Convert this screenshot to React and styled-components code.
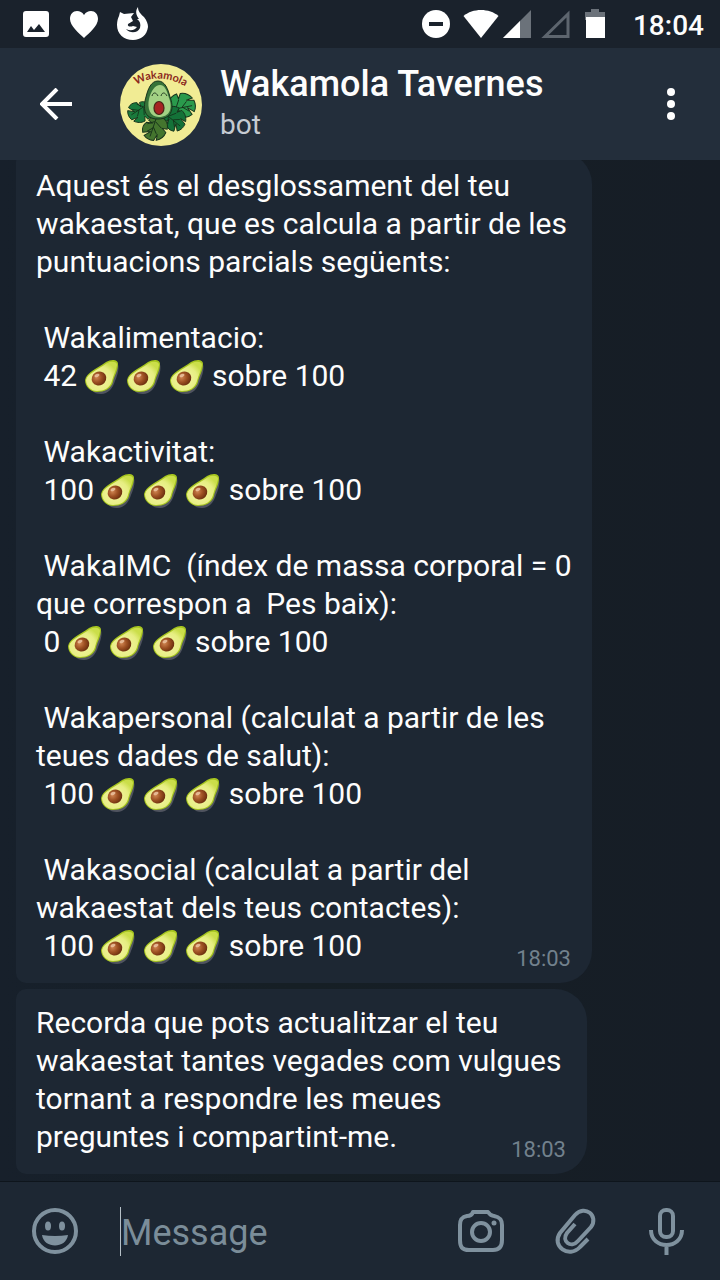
import React from "react";
import styled, { createGlobalStyle } from "styled-components";

const GlobalStyle = createGlobalStyle`
  * { box-sizing: border-box; }
  body { margin: 0; background: #161e27; }
`;

const Screen = styled.div`
  display: flex;
  flex-direction: column;
  height: 100vh;
  font-family: Roboto, "Liberation Sans", sans-serif;
  color: #fdfdfd;
  background: #161e27;
`;

const StatusBar = styled.div`
  display: flex;
  flex: none;
  align-items: center;
  justify-content: space-between;
  height: 48px;
  padding: 0 16px 0 20px;
  background: #1a222c;
`;

const StatusGroup = styled.div`
  display: flex;
  align-items: center;
  gap: ${(p) => p.$gap || 0}px;
`;

const Clock = styled.span`
  padding-top: 4px;
  font-size: 28px;
  font-weight: 500;
  line-height: 44px;
`;

const Header = styled.header`
  display: flex;
  flex: none;
  align-items: center;
  height: 112px;
  padding: 0 25px 0 32px;
  background: #232e3b;
  z-index: 1;
`;

const IconButton = styled.button`
  display: flex;
  align-items: center;
  justify-content: center;
  flex: none;
  width: 48px;
  height: 48px;
  padding: 0;
  border: 0;
  background: none;
  color: inherit;
`;

const AvatarWrap = styled.div`
  flex: none;
  width: 82px;
  height: 82px;
  margin: 2px 18px 0 40px;
`;

const Titles = styled.div`
  flex: 1;
  min-width: 0;
`;

const Title = styled.h1`
  margin: 0;
  font-size: 36px;
  font-weight: 500;
  line-height: 42px;
  white-space: nowrap;
`;

const Subtitle = styled.p`
  margin: 0;
  font-size: 28px;
  line-height: 40px;
  color: #c5cbd2;
`;

const Chat = styled.main`
  display: flex;
  flex: 1;
  flex-direction: column;
  justify-content: flex-end;
  align-items: flex-start;
  gap: 6px;
  min-height: 0;
  padding: 0 16px 7px;
  overflow: hidden;
  background: linear-gradient(90deg, #17202b, #161f25 40%, #161d26);
`;

const Bubble = styled.article`
  flex: none;
  max-width: ${(p) => p.$max}px;
  padding: 15px 20px 18px;
  border-radius: 10px 32px 32px 10px;
  background: #1d2733;
`;

const Paragraph = styled.p`
  margin: 0 0 ${(p) => (p.$last ? 0 : 38)}px;
  font-size: 30px;
  line-height: 38px;
  white-space: pre-wrap;
`;

const Time = styled.time`
  float: right;
  height: 24px;
  margin: 20px 1px -6px 0;
  font-size: 22px;
  line-height: 24px;
  color: #72818d;
`;

const EmojiSvg = styled.svg`
  width: 35px;
  height: 35px;
  vertical-align: -8px;
`;

const Composer = styled.form`
  display: flex;
  flex: none;
  align-items: center;
  height: 99px;
  padding: 0 30px;
  border-top: 1px solid #0e151c;
  background: #1d2733;
  color: #7f919e;
`;

const Field = styled.div`
  display: flex;
  flex: 1;
  align-items: center;
  min-width: 0;
  margin-left: 42px;
`;

const Caret = styled.span`
  flex: none;
  width: 1px;
  height: 49px;
  background: #b6c0c7;
`;

const MessageInput = styled.input`
  flex: 1;
  min-width: 0;
  padding: 4px 0 0;
  border: 0;
  outline: 0;
  background: none;
  color: #fdfdfd;
  font-family: inherit;
  font-size: 36px;
  line-height: 48px;
  &::placeholder { color: #7b8d99; opacity: 1; }
`;

const Actions = styled.div`
  display: flex;
  flex: none;
  gap: 45px;
`;

const Avocado = () => (
  <EmojiSvg viewBox="0 0 35 35" role="img" aria-label="🥑">
    <defs>
      <radialGradient id="pit" cx="0.4" cy="0.35" r="0.7">
        <stop offset="0" stopColor="#cf8450" />
        <stop offset="0.5" stopColor="#9c4f22" />
        <stop offset="1" stopColor="#652b0c" />
      </radialGradient>
      <radialGradient id="flesh" cx="0.42" cy="0.6" r="0.62">
        <stop offset="0" stopColor="#f6f4a4" />
        <stop offset="0.7" stopColor="#e6ee82" />
        <stop offset="1" stopColor="#cbde4a" />
      </radialGradient>
    </defs>
    <path d="M32 3c3 5 1 12-2 19-2 7-7 13-14 13-4 0-7-1-9-4l4-5z" fill="#50545f" />
    <path d="M21 3c5-3 12-3 12 2 0 7-4 12-5 18-2 7-9 10-16 10C5 33 0 27 0 21 2 13 10 11 21 3z" fill="#a5c41e" />
    <path d="M22 4c4-2 10-2 10 2-1 6-4 11-5 16-2 7-8 10-15 10C6 32 1 27 1 21c2-7 10-9 21-17z" fill="url(#flesh)" />
    <ellipse cx="14" cy="19.500" rx="7.500" ry="6.800" transform="rotate(-30 14 19.500)" fill="url(#pit)" />
    <ellipse cx="12" cy="16.500" rx="2.600" ry="1.500" transform="rotate(-20 12 16.500)" fill="#f4d0b0" opacity="0.75" />
  </EmojiSvg>
);

const Score = ({ value }) => (
  <>
    {` ${value} `}<Avocado /> <Avocado /> <Avocado />{" sobre 100"}
  </>
);

const Leaf = ({ transform, fill }) => (
  <g transform={transform}>
    <path
      d="M0 0c-2-7 2-11 7-12l1 4 2-4c4 0 7 2 9 5l-5 1 6 1c1 3 1 6-1 9l-5-4 3 6c-3 2-6 2-9 0l-1-5-1 4C3 5 1 3 0 0z"
      fill={fill}
      stroke="#17331c"
      strokeWidth="0.8"
    />
    <path d="M0 0 18-1M5-1 8-7M10-1l4-4M5 0l4 5M10-1l5 4" fill="none" stroke="#143019" strokeWidth="0.7" />
  </g>
);

const Avatar = () => (
  <svg width="82" height="82" viewBox="0 0 82 82" role="img" aria-label="Wakamola">
    <defs>
      <path id="arc" d="M16 21Q39 7 66 23" />
    </defs>
    <circle cx="41" cy="41" r="41" fill="#f1ec94" />
    <Leaf transform="translate(28 40) rotate(150) scale(1.1)" fill="#1a7a3c" />
    <Leaf transform="translate(50 46) rotate(-8) scale(1.25)" fill="#2a9a4c" />
    <Leaf transform="translate(44 49) rotate(42) scale(1.15)" fill="#147238" />
    <Leaf transform="translate(37 52) rotate(112) scale(1.2)" fill="#44752e" />
    <path d="M38 17c7 0 10 8 12 16 4 10 3 22-12 22S23 43 26 33c2-8 5-16 12-16z" fill="#357238" stroke="#17331c" strokeWidth="1" />
    <path d="M40 21c5 0 7 6 9 13 4 10 1 19-10 19-9 0-12-9-10-18 2-8 6-14 11-14z" fill="#a3d184" />
    <ellipse cx="39" cy="44" rx="5" ry="6.500" fill="#a52322" stroke="#472616" strokeWidth="1.2" />
    <path d="M32 32c1-4 4-4 6 0M41 32c1-4 4-4 6 0" fill="none" stroke="#243d23" strokeWidth="1" />
    <text fill="#8c2920" fontFamily="Lato, sans-serif" fontSize="11" fontWeight="700">
      <textPath href="#arc">Wakamola</textPath>
    </text>
  </svg>
);

export default function App() {
  return (
    <Screen>
      <GlobalStyle />
      <StatusBar>
        <StatusGroup $gap={16}>
          <svg width="32" height="32" viewBox="0 0 32 32" aria-hidden="true">
            <path fill="#fff" fillRule="evenodd" d="M6 3h20a3 3 0 0 1 3 3v20a3 3 0 0 1-3 3H6a3 3 0 0 1-3-3V6a3 3 0 0 1 3-3zm1 21h18l-6-8-5 6-3-4z" />
          </svg>
          <svg width="32" height="32" viewBox="0 0 32 32" aria-hidden="true">
            <path fill="#fff" d="M16 30C11 25 2 18 2 11c0-5 3-8 7-8 3 0 5 1 7 4 2-3 4-4 7-4 4 0 7 3 7 8 0 7-9 14-14 19z" />
          </svg>
          <svg width="32" height="34" viewBox="0 0 32 34" aria-hidden="true">
            <path fill="#fff" d="M4 5l4 2 10-1-3 4 2 4-5 3c-1 3 3 3 5 2l4 1c-3 4-7 4-11 2 4 5 12 4 14-1 1-4 0-7-3-9h2c-3-4-4-8-1-12 0 5 3 7 6 10 3 4 4 7 4 10-1 8-7 13-15 13C8 33 1 27 1 18c0-4 1-7 2-9z" />
          </svg>
        </StatusGroup>
        <StatusGroup $gap={26}>
          <svg width="188" height="32" viewBox="0 0 188 32" aria-hidden="true">
            <circle cx="17" cy="16" r="14" fill="#fff" />
            <path d="M10 16h14" stroke="#1b232d" strokeWidth="4" />
            <path d="M62 30 44.500 8c9-8 26-8 35 0z" fill="#fff" />
            <path d="M112 2v28H84z" fill="#6b727a" />
            <path d="M101 13v17H84z" fill="#fff" />
            <path d="M149 6v22.500h-23z" fill="none" stroke="#5d656e" strokeWidth="3" />
            <path d="M172 1h8v3h6v8h-20V4h6z" fill="#6b727a" />
            <path d="M167 9h19v21h-19z" fill="#fff" />
          </svg>
          <Clock>18:04</Clock>
        </StatusGroup>
      </StatusBar>

      <Header>
        <IconButton type="button" aria-label="Back">
          <svg width="32" height="32" viewBox="0 0 32 32" fill="none" stroke="#fff" strokeWidth="4">
            <path d="M32 16H3M17 1 2 16l15 15" />
          </svg>
        </IconButton>
        <AvatarWrap><Avatar /></AvatarWrap>
        <Titles>
          <Title>Wakamola Tavernes</Title>
          <Subtitle>bot</Subtitle>
        </Titles>
        <IconButton type="button" aria-label="More options">
          <svg width="8" height="32" viewBox="0 0 8 32" fill="#fff">
            <circle cx="4" cy="4" r="4" />
            <circle cx="4" cy="16" r="4" />
            <circle cx="4" cy="28" r="4" />
          </svg>
        </IconButton>
      </Header>

      <Chat>
        <Bubble $max={576}>
          <Paragraph>
            Aquest és el desglossament del teu wakaestat, que es calcula a partir de les puntuacions parcials següents:
          </Paragraph>
          <Paragraph>{" Wakalimentacio:\n"}<Score value={42} /></Paragraph>
          <Paragraph>{" Wakactivitat:\n"}<Score value={100} /></Paragraph>
          <Paragraph>
            {" WakaIMC  (índex de massa corporal = 0 que correspon a  Pes baix):\n"}<Score value={0} />
          </Paragraph>
          <Paragraph>{" Wakapersonal (calculat a partir de les teues dades de salut):\n"}<Score value={100} /></Paragraph>
          <Paragraph $last>
            {" Wakasocial (calculat a partir del wakaestat dels teus contactes):\n"}<Score value={100} />
            <Time>18:03</Time>
          </Paragraph>
        </Bubble>
        <Bubble $max={571}>
          <Paragraph $last>
            {"Recorda que pots actualitzar el teu wakaestat tantes vegades com vulgues tornant a respondre les meues "}
            {"preguntes i compartint-me."}
            <Time>18:03</Time>
          </Paragraph>
        </Bubble>
      </Chat>

      <Composer onSubmit={(e) => e.preventDefault()}>
        <IconButton type="button" aria-label="Emoji">
          <svg width="48" height="48" viewBox="0 0 48 48" fill="currentColor">
            <circle cx="25" cy="24" r="21" fill="none" stroke="currentColor" strokeWidth="4" />
            <ellipse cx="18" cy="19" rx="3" ry="4.500" />
            <ellipse cx="32" cy="19" rx="3" ry="4.500" />
            <path d="M12 28q13 2 26 0c-2 14-24 14-26 0z" />
          </svg>
        </IconButton>
        <Field>
          <Caret />
          <MessageInput type="text" placeholder="Message" aria-label="Message" />
        </Field>
        <Actions>
          <IconButton type="button" aria-label="Camera">
            <svg width="48" height="48" viewBox="0 0 48 48" fill="none" stroke="currentColor" strokeWidth="4">
              <path d="M11 9c3 0 5-1 6-4h15c2 3 3 4 6 4 5 1 8 3 8 9v15c0 7-3 10-9 10H13c-7 0-9-3-9-10V18c0-6 2-8 7-9z" strokeLinejoin="round" />
              <circle cx="25" cy="25" r="9" />
              <circle cx="38" cy="16" r="2.500" fill="currentColor" stroke="none" />
            </svg>
          </IconButton>
          <IconButton type="button" aria-label="Attach">
            <svg width="48" height="48" viewBox="0 0 48 48" fill="none" stroke="currentColor" strokeWidth="4">
              <path d="M39 32l-8 8C20 52 2 39 11 26L26 8c10-11 24 1 16 12L29 34c-7 8-17 0-11-8l8-9" />
            </svg>
          </IconButton>
          <IconButton type="button" aria-label="Record voice message">
            <svg width="48" height="48" viewBox="0 0 48 48" fill="none" stroke="currentColor" strokeWidth="4">
              <rect x="18" y="3" width="13" height="27" rx="6" />
              <path d="M9 23c0 20 31 20 31 0M24.500 38v10" />
            </svg>
          </IconButton>
        </Actions>
      </Composer>
    </Screen>
  );
}
